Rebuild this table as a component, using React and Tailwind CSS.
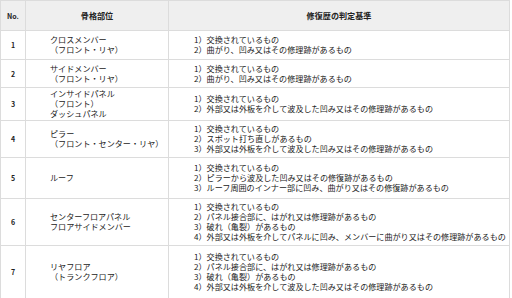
const ROWS = [
  {
    no: "1",
    h: "h-[29px]",
    part: ["クロスメンバー", "（フロント・リヤ）"],
    rules: ["1）交換されているもの", "2）曲がり、凹み又はその修理跡があるもの"],
  },
  {
    no: "2",
    h: "h-[28px]",
    part: ["サイドメンバー", "（フロント・リヤ）"],
    rules: ["1）交換されているもの", "2）曲がり、凹み又はその修理跡があるもの"],
  },
  {
    no: "3",
    h: "h-[33px]",
    part: ["インサイドパネル", "（フロント）", "ダッシュパネル"],
    rules: ["1）交換されているもの", "2）外部又は外板を介して波及した凹み又はその修理跡があるもの"],
  },
  {
    no: "4",
    h: "h-[37px]",
    part: ["ピラー", "（フロント・センター・リヤ）"],
    rules: [
      "1）交換されているもの",
      "2）スポット打ち直しがあるもの",
      "3）外部又は外板を介して波及した凹み又はその修理跡があるもの",
    ],
  },
  {
    no: "5",
    h: "h-[41px]",
    part: ["ルーフ"],
    rules: [
      "1）交換されているもの",
      "2）ピラーから波及した凹み又はその修復跡があるもの",
      "3）ルーフ周囲のインナー部に凹み、曲がり又はその修復跡があるもの",
    ],
  },
  {
    no: "6",
    h: "h-[47px]",
    part: ["センターフロアパネル", "フロアサイドメンバー"],
    rules: [
      "1）交換されているもの",
      "2）パネル接合部に、はがれ又は修理跡があるもの",
      "3）破れ（亀裂）があるもの",
      "4）外部又は外板を介してパネルに凹み、メンバーに曲がり又はその修理跡があるもの",
    ],
  },
  {
    no: "7",
    h: "h-[52px]",
    part: ["リヤフロア", "（トランクフロア）"],
    rules: [
      "1）交換されているもの",
      "2）パネル接合部に、はがれ又は修理跡があるもの",
      "3）破れ（亀裂）があるもの",
      "4）外部又は外板を介して波及した凹み又はその修理跡があるもの",
    ],
  },
];

const font = { fontFamily: '"Noto Sans CJK JP", "Noto Sans", sans-serif' };

export default function App() {
  return (
    <div className="w-[512px] h-[298px] bg-white overflow-hidden" style={font}>
      <div className="w-[510px] border border-[#dcdcdc] text-[8.1px] leading-[10px] text-[#222]">
        {/* header */}
        <div className="flex h-[30px] bg-[#efefef] border-b border-[#dcdcdc] font-bold">
          <div className="w-[25px] shrink-0 flex items-center justify-center border-r border-[#dcdcdc] text-[7px]">
            No.
          </div>
          <div className="w-[143px] shrink-0 flex items-center justify-center border-r border-[#dcdcdc]">
            骨格部位
          </div>
          <div className="flex-1 flex items-center justify-center">修復歴の判定基準</div>
        </div>
        {ROWS.map((r, i) => (
          <div
            key={r.no}
            className={`flex ${r.h} ${i < ROWS.length - 1 ? "border-b border-[#dcdcdc]" : ""}`}
          >
            <div className="w-[25px] shrink-0 flex items-center justify-center border-r border-[#dcdcdc] text-[7px] font-bold">
              {r.no}
            </div>
            <div className="w-[143px] shrink-0 flex flex-col justify-center pl-[24px] border-r border-[#dcdcdc]">
              {r.part.map((t) => (
                <div key={t}>{t}</div>
              ))}
            </div>
            <div className="flex-1 flex flex-col justify-center pl-[25px]">
              {r.rules.map((t) => (
                <div key={t} className="whitespace-nowrap">
                  {t}
                </div>
              ))}
            </div>
          </div>
        ))}
      </div>
    </div>
  );
}
